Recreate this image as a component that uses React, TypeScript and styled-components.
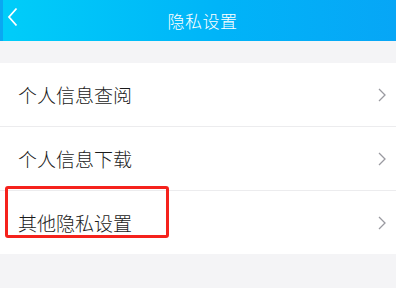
import React from "react";
import styled, { createGlobalStyle } from "styled-components";

const Global = createGlobalStyle`
  html, body { margin: 0; padding: 0; background: #f4f4f6; }
  body { font-family: "Noto Sans CJK SC", "Noto Sans", sans-serif; }
`;

const Page = styled.div`
  width: 396px;
  height: 288px;
  background: #f4f4f6;
  overflow: hidden;
`;

const Header = styled.div`
  height: 41px;
  display: flex;
  align-items: center;
  justify-content: center;
  position: relative;
  background: linear-gradient(90deg, #00cdf9 0%, #00b4f8 55%, #07a6f6 100%);
  border-left: 3px solid #0aa8f2;
  box-sizing: border-box;
`;

const Title = styled.div`
  color: #fff;
  font-size: 17px;
  font-weight: 300;
  letter-spacing: 0.5px;
  margin-left: 6px;
`;

const Back = styled.div`
  position: absolute;
  left: 2px;
  top: 7px;
  width: 14px;
  height: 20px;
`;

const Spacer = styled.div`
  height: 22px;
`;

const List = styled.div`
  background: #fff;
`;

const Row = styled.div<{ $last?: boolean }>`
  height: 63px;
  display: flex;
  align-items: center;
  padding: 0 10px 0 18px;
  border-bottom: ${(p) => (p.$last ? "none" : "1px solid #ececee")};
  position: relative;
`;

const Label = styled.div`
  flex: 1;
  font-size: 19px;
  font-weight: 300;
  color: #1a1a1a;
`;

const Highlight = styled.div`
  position: absolute;
  left: 5px;
  top: -5px;
  width: 164px;
  height: 52px;
  box-sizing: border-box;
  border: 3px solid #f5221c;
  border-radius: 3px;
`;

const Chevron = () => (
  <svg width="8" height="14" viewBox="0 0 8 14">
    <path d="M1 1 L7 7 L1 13" fill="none" stroke="#9a9aa0" strokeWidth="1.3" />
  </svg>
);

export default function App() {
  const items = ["个人信息查阅", "个人信息下载", "其他隐私设置"];
  return (
    <Page>
      <Global />
      <Header>
        <Back>
          <svg width="14" height="20" viewBox="0 0 14 20">
            <path d="M11.5 1.5 L4 10 L11.5 18.5" fill="none" stroke="#fff" strokeWidth="1.8" />
          </svg>
        </Back>
        <Title>隐私设置</Title>
      </Header>
      <Spacer />
      <List>
        {items.map((t, i) => (
          <Row key={t} $last={i === items.length - 1}>
            {i === 2 && <Highlight />}
            <Label>{t}</Label>
            <Chevron />
          </Row>
        ))}
      </List>
    </Page>
  );
}
